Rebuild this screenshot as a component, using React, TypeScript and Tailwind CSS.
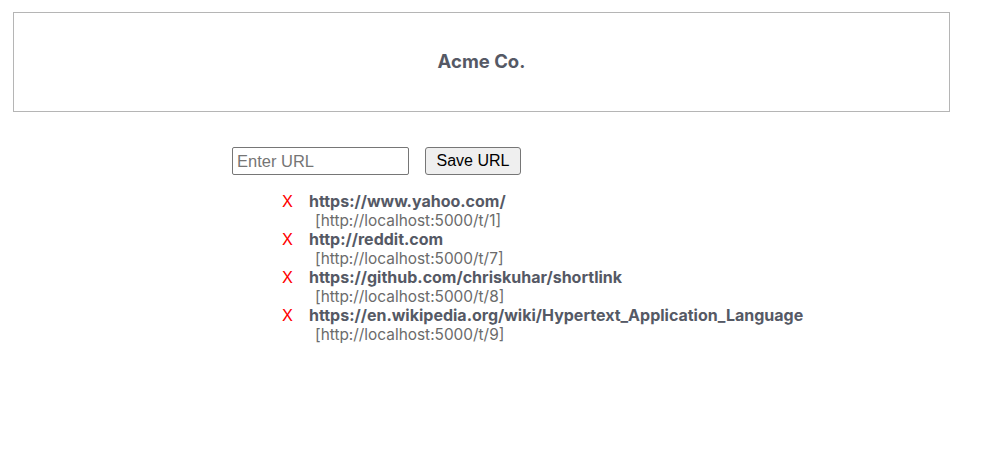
const links = [
  { url: "https://www.yahoo.com/", short: "http://localhost:5000/t/1" },
  { url: "http://reddit.com", short: "http://localhost:5000/t/7" },
  { url: "https://github.com/chriskuhar/shortlink", short: "http://localhost:5000/t/8" },
  { url: "https://en.wikipedia.org/wiki/Hypertext_Application_Language", short: "http://localhost:5000/t/9" },
];

export default function App() {
  return (
    <div className="min-h-[458px] bg-white font-['Inter',sans-serif]">
      <div className="pt-3 pl-[13px]">
        <div className="w-[937px] h-[100px] border border-[#b5b5b5] flex items-center justify-center">
          <h1 className="text-[18.5px] font-bold text-[#555965]">Acme Co.</h1>
        </div>
      </div>

      <div className="pl-[232px] pt-[35px] flex items-center gap-4 font-['Liberation_Sans',Arial,sans-serif]">
        <input
          type="text"
          placeholder="Enter URL"
          className="w-[177px] h-[28px] border border-[#767676] rounded-[2px] px-1 text-[16.5px] text-black placeholder:text-[#757575]"
        />
        <button className="h-[28px] px-[10.5px] border border-[#767676] rounded-[3px] bg-[#efefef] text-[16px] text-black">
          Save URL
        </button>
      </div>

      <ul className="pl-[282px] pt-[17px] text-[16px] leading-[19px]">
        {links.map((link) => (
          <li key={link.short}>
            <div className="flex">
              <span className="w-[27px] text-[#ff0000]">X</span>
              <span className="font-bold text-[#555965]">{link.url}</span>
            </div>
            <div className="pl-[33px] text-[15.4px] text-[#6b6b6b]">[{link.short}]</div>
          </li>
        ))}
      </ul>
    </div>
  );
}
